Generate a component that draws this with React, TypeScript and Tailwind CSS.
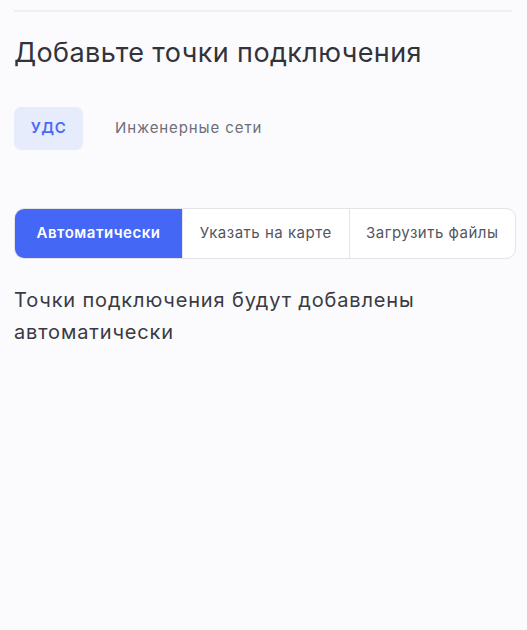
import { useState } from "react";

const tabs = ["УДС", "Инженерные сети"];
const modes = ["Автоматически", "Указать на карте", "Загрузить файлы"];

export default function App() {
    const [tab, setTab] = useState(0);
    const [mode, setMode] = useState(0);

    return (
        <div className="min-h-[630px] w-[527px] bg-[#fbfbfd] px-[14px] pt-[10px] font-['Inter',sans-serif]">
            <div className="mr-[1px] h-[2px] bg-[#eeeef3]" />

            <h2 className="mt-[24px] text-[27px] leading-[34px] font-normal text-[#33333b] tracking-[0.4px]">
                Добавьте точки подключения
            </h2>

            {/* Tabs */}
            <div className="mt-[37px] flex items-center gap-[12px]">
                {tabs.map((t, i) => (
                    <button
                        key={t}
                        onClick={() => setTab(i)}
                        className={
                            i === tab
                                ? "h-[43px] w-[69px] rounded-[7px] bg-[#e7ecfd] text-[15px] font-semibold tracking-[0.6px] text-[#4a6cf5]"
                                : "h-[43px] rounded-[7px] px-[20px] text-[15px] font-normal tracking-[0.9px] text-[#6e6e7a]"
                        }
                    >
                        {t}
                    </button>
                ))}
            </div>

            {/* Segmented control */}
            <div className="mt-[58px] flex h-[51px] w-[502px] overflow-hidden rounded-[10px] border border-[#e3e3e8] bg-white">
                {modes.map((m, i) => (
                    <button
                        key={m}
                        onClick={() => setMode(i)}
                        className={
                            i === mode
                                ? "w-[167px] bg-[#4468f5] text-[15px] font-semibold tracking-[0.5px] text-white"
                                : "flex-1 border-l border-[#e3e3e8] text-[15px] font-normal tracking-[0.5px] text-[#55555f] first:border-l-0"
                        }
                    >
                        {m}
                    </button>
                ))}
            </div>

            <p className="mt-[25px] text-[20px] leading-[32px] tracking-[0.85px] text-[#3a3a43]">
                Точки подключения будут добавлены автоматически
            </p>
        </div>
    );
}
